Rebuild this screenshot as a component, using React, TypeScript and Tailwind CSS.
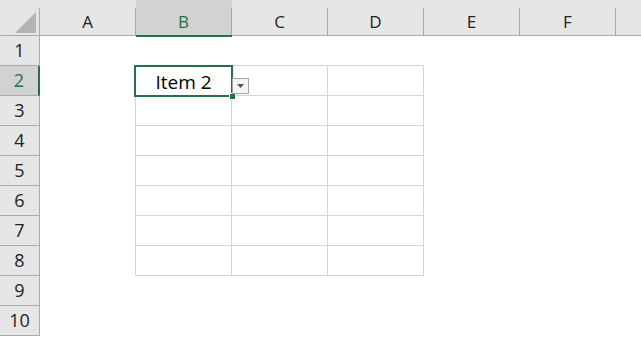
const cols = ['A', 'B', 'C', 'D', 'E', 'F'];
const rows = [1, 2, 3, 4, 5, 6, 7, 8, 9, 10];

// table B2:D8 has visible gridlines, everything else is plain white
const rightLine = (c: number, r: number) => c <= 3 && r >= 2 && r <= 8;
const bottomLine = (c: number, r: number) => c >= 1 && c <= 3 && r >= 1 && r <= 8;

const App = () => {
  return (
    <div className="relative w-[641px] h-[337px] overflow-hidden bg-white font-['Open_Sans',sans-serif] text-[#222]">
      {/* column headers */}
      <div className="flex h-[36px] bg-[#e6e6e6] border-b border-[#ababab]">
        <div className="w-[40px] shrink-0 pt-2">
          <div className="h-full border-r border-[#ababab] relative">
            <svg className="absolute left-[15px] top-[4px]" width="21" height="21" viewBox="0 0 21 21">
              <polygon points="21,0 21,21 0,21" fill="#b4b4b4" />
            </svg>
          </div>
        </div>
        {cols.map((c) => (
          <div
            key={c}
            className={`relative w-[96px] shrink-0 pt-2 ${c === 'B' ? 'bg-[#d2d2d2]' : ''}`}
          >
            <div
              className={`h-full border-r border-[#ababab] flex items-center justify-center text-[17px] ${
                c === 'B' ? 'text-[#217346]' : ''
              }`}
            >
              {c}
            </div>
            {c === 'B' && (
              <span className="absolute left-0 right-0 bottom-[-2px] h-[2px] bg-[#217346]" />
            )}
          </div>
        ))}
        <div className="flex-1" />
      </div>

      {/* rows */}
      {rows.map((r) => (
        <div key={r} className="flex h-[30px]">
          <div
            className={`w-[40px] shrink-0 flex items-center justify-center border-b border-[#ababab] text-[18px] ${
              r === 2
                ? 'bg-[#d2d2d2] text-[#217346] border-r-2 border-r-[#217346]'
                : 'bg-[#e6e6e6] border-r border-r-[#ababab]'
            }`}
          >
            {r}
          </div>
          {cols.map((c, ci) => (
            <div
              key={c}
              className={`w-[96px] shrink-0 border-r border-b flex items-center justify-center pt-[3px] text-[19px] text-black ${
                rightLine(ci, r) ? 'border-r-[#d4d4d4]' : 'border-r-white'
              } ${bottomLine(ci, r) ? 'border-b-[#d4d4d4]' : 'border-b-white'}`}
            >
              {c === 'B' && r === 2 ? 'Item 2' : ''}
            </div>
          ))}
          <div className="flex-1" />
        </div>
      ))}

      {/* active cell B2 */}
      <div className="absolute left-[134px] top-[65px] w-[99px] h-[32px] border-2 border-[#217346]" />
      <div className="absolute left-[229px] top-[93px] w-[7px] h-[7px] bg-[#217346] border border-white" />

      {/* validation dropdown */}
      <div className="absolute left-[232px] top-[78px] w-[17px] h-[16px] bg-[#f4f4f4] border border-[#a6a6a6] flex items-center justify-center">
        <svg width="7" height="4" viewBox="0 0 7 4">
          <polygon points="0,0 7,0 3.5,4" fill="#555" />
        </svg>
      </div>
    </div>
  );
};

export default App;
